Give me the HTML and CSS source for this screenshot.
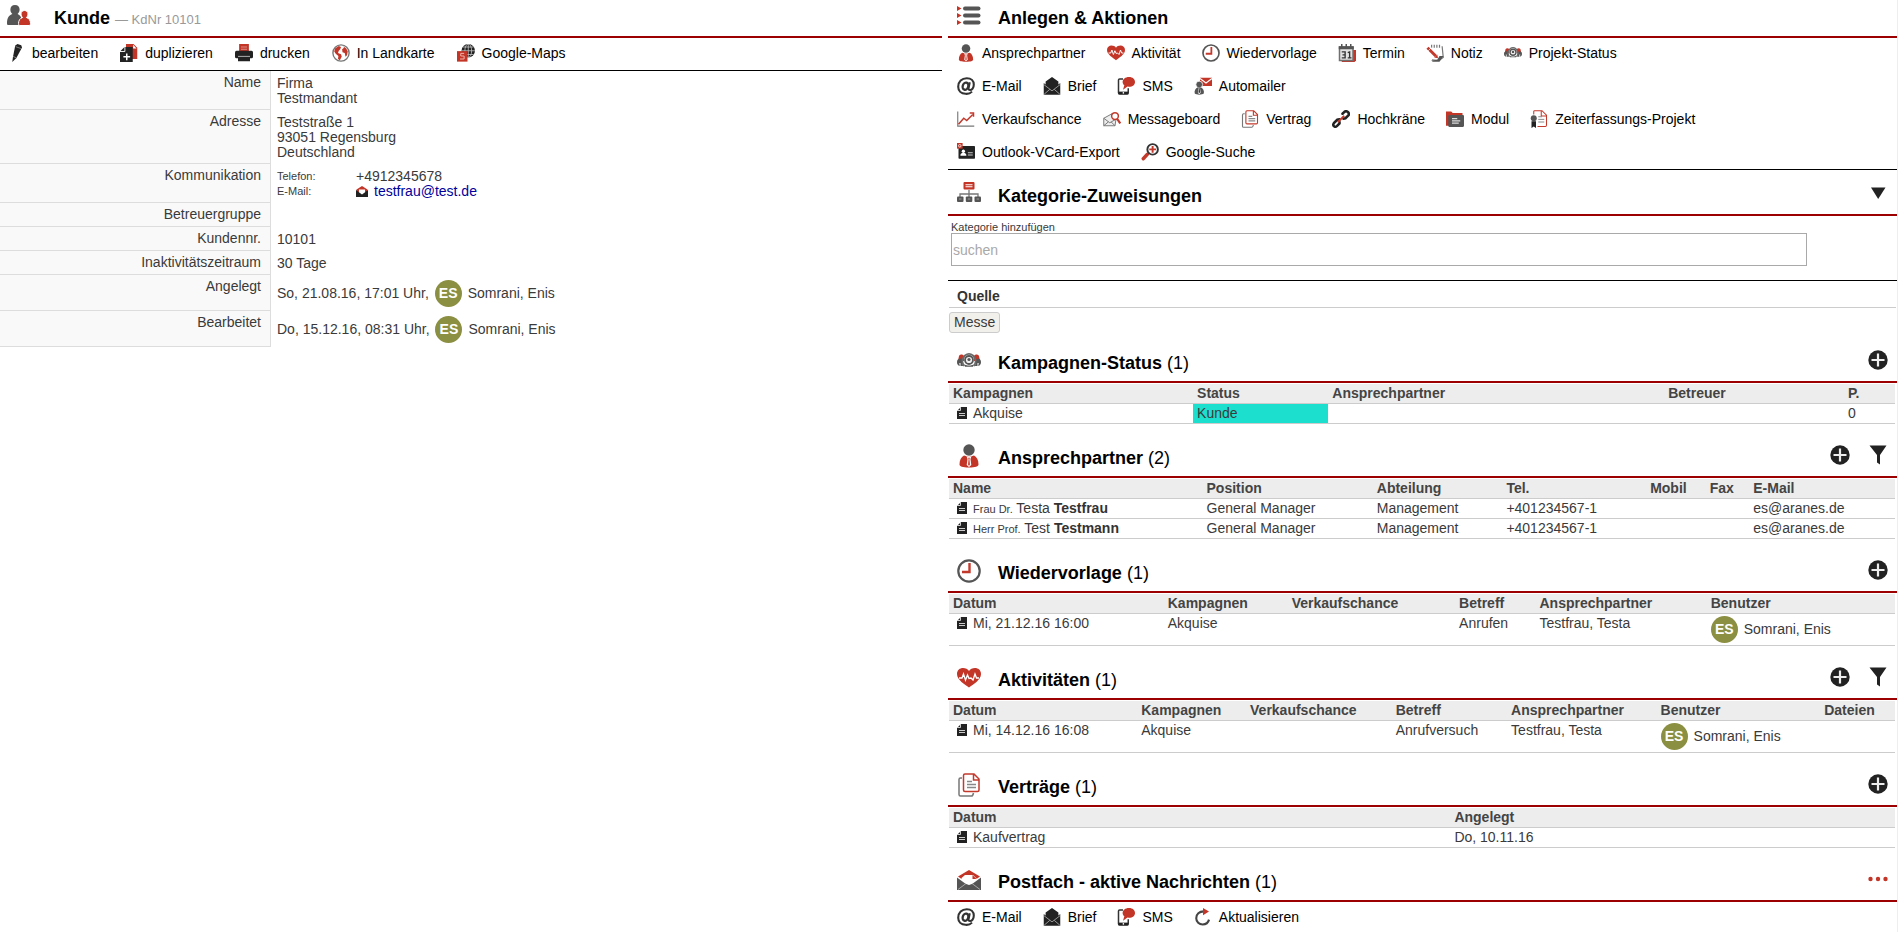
FILE: index.html
```html
<!DOCTYPE html>
<html lang="de">
<head>
<meta charset="utf-8">
<title>Kunde – KdNr 10101</title>
<link rel="stylesheet" href="styles.css">
</head>
<body>
<svg class="sprite" aria-hidden="true">
  <symbol id="users" viewBox="0 0 24 24">
    <path class="g" d="M8 1c3 0 4.600 2 4.600 4.600 0 2-.8 3.400-2 4.400 2.400 1 4 3 4 6l-1 5H1.500C.6 21 0 20.500 0 19.500 0 14 2 11 5.400 10 4 9 3.400 7.600 3.400 5.600 3.400 3 5 1 8 1z"/>
    <path class="r" stroke="#fff" stroke-width="1" d="M17.500 6.500c2.200 0 3.500 1.500 3.500 3.500 0 1.500-.6 2.700-1.600 3.500 2.800.8 4.100 3.200 4.100 6 0 1.300-.6 2-1.500 2h-9c-1 0-1.500-.7-1.500-2 0-2.800 1.300-5.200 4.100-6-1-.8-1.600-2-1.600-3.500 0-2 1.300-3.500 3.500-3.500z"/>
  </symbol>
  <symbol id="list" viewBox="0 0 24 24">
    <path class="r" d="M0 2l4.500 2.500L0 7zM0 9l4.500 2.500L0 14zM0 16l4.500 2.500L0 21z"/>
    <g class="g"><rect x="6" y="2.500" width="17.500" height="4" rx="2"/><rect x="6" y="9.500" width="17.500" height="4" rx="2"/><rect x="6" y="16.500" width="17.500" height="4" rx="2"/></g>
  </symbol>
  <symbol id="person" viewBox="0 0 24 24">
    <circle class="g" cx="12" cy="6" r="5.700"/>
    <path class="r" d="M7 11.500l5 1.500 5-1.500c3 1.500 4.500 5 4.500 9 0 2-3 3-9.500 3s-9.500-1-9.500-3c0-4 1.500-7.500 4.500-9z"/>
    <path fill="#fff" d="M9.500 12l2.500 1.500 2.500-1.500-1 3 .8 6L12 23l-2.300-2L10.500 15z"/>
    <path class="r" d="M11.300 14h1.400l-.3 1.500.5 5L12 22l-.9-1.500.5-5z"/>
  </symbol>
  <symbol id="heart" viewBox="0 0 24 24">
    <path class="r" d="M12 21.500C8 18.500 0 14 0 8c0-4 3-6 6-6 2.500 0 5 1 6 3 1-2 3.500-3 6-3 3 0 6 2 6 6 0 6-8 10.500-12 13.500z"/>
    <path class="l" stroke="#fff" stroke-width="1.300" d="M2 12h3l1.500-4 2 6 2-5 1.500 3.500L14 12l2 2 2-6 1.500 4H22"/>
  </symbol>
  <symbol id="clock" viewBox="0 0 24 24">
    <circle class="l sg" stroke-width="2.200" cx="12" cy="12" r="10.700"/>
    <path class="l sr" stroke-width="2.400" d="M12.500 4v9H5"/>
  </symbol>
  <symbol id="calendar" viewBox="0 0 24 24">
    <path class="r" d="M5 8h19v14l-2 2H5z"/>
    <path fill="#e2e2e2" stroke="#707070" stroke-width="2" d="M2 4h18v18H2z"/>
    <path class="g" d="M1 3h20v4H1zM4 0h2v5H4zM10 0h2v5h-2zM16 0h2v5h-2z"/>
    <path class="l" stroke="#333" stroke-width="1.800" d="M5 10.500h4.500v8H5M6 14.500h3.500M13 11.500l2.500-1v8M13 18.500h5"/>
  </symbol>
  <symbol id="note" viewBox="0 0 24 24">
    <path class="l" stroke="#777" stroke-width="1.600" d="M7.500 1v4M11 1v4M14.500 1v4M18 1v4M21.500 3l1.500 15-6 4-9-1"/>
    <path class="g" d="M23.500 16l-5.500 7.500H9l-2-1.500 8-1 3-5z"/>
    <path class="l sr" stroke-width="4" d="M2 5l11 11"/><path class="l" stroke="#fff" stroke-width="1" d="M3 9l4-4"/>
    <path class="r" d="M15 14l1 5-5-1z"/>
  </symbol>
  <symbol id="gears" viewBox="0 0 24 24">
    <path class="r" d="M2 7c1-2 4-2 5 0v5H1zM22 7c-1-2-4-2-5 0v5h6z"/>
    <path class="g" d="M0 13c0-3 3-4.500 5-2.500l1 6.500H3.500v-3H2.300l.5 3C.8 16.500 0 15 0 13zM24 13c0-3-3-4.500-5-2.500L18 17h2.500v-3h1.200l-.5 3c2-.5 2.800-2 2.800-4z"/>
    <path fill="none" stroke="#6a6a6a" stroke-width="1.800" d="M7 17c-2.500-4-1.500-8 1-10.500 2.500-2 5.500-2 8 0 2.500 2.500 3.500 6.500 1 10.500"/>
    <circle fill="#eee" stroke="#555" stroke-width="1.800" cx="12" cy="11" r="4"/><circle class="g" cx="12" cy="10.500" r="1.600"/>
    <path class="g" d="M7 15.500l3.500 1h3l3.500-1-1 2.300H8z"/>
  </symbol>
  <symbol id="at" viewBox="0 0 24 24">
    <path class="l" stroke="#333" stroke-width="2.800" d="M20 19.500C17.500 22 14.500 22.700 11.500 22.400 5.500 22.200 1.600 18.500 1.600 13 1.600 6 6.500 1.600 13 1.600c6 0 9.400 3.700 9.400 8.400 0 4.500-2.600 7.400-5 7.400-1.900 0-2.300-1.400-1.900-3L17 7"/>
    <ellipse class="l" stroke="#333" stroke-width="3" cx="11.300" cy="12.200" rx="3.700" ry="4.900" transform="rotate(18 11.300 12.200)"/>
  </symbol>
  <symbol id="letter" viewBox="0 0 24 24">
    <path class="d" d="M12 0l8.500 6v4l2.500-2v15.500H1V8l2.500 2V6z"/>
    <path class="l" stroke="#bbb" stroke-width="1" d="M1 10l11 8.500L23 10M1.500 23L9 16.500M22.500 23L15 16.500"/>
  </symbol>
  <symbol id="sms" viewBox="0 0 24 24">
    <path class="l" stroke="#333" stroke-width="2" d="M8 2.500H3.500c-1 0-1.500.5-1.500 1.500v17c0 1 .5 1.500 1.500 1.500h10c1 0 1.500-.5 1.500-1.500v-6"/>
    <path class="d" d="M2 19.500h13v3.500H2z"/><circle cx="8.500" cy="21.200" r="1.100" fill="#fff"/>
    <path class="r" d="M16 0c5 0 8 3 8 6.500S21 13 16 13l-2-.2L8 17l1.800-6C8.300 9.700 7.500 8.300 7.500 6.500 7.500 3 11 0 16 0z"/>
  </symbol>
  <symbol id="automailer" viewBox="0 0 24 24">
    <path class="r" d="M8 1h16v11H8z"/><path class="l" stroke="#fff" stroke-width="1.500" d="M8 2l8 6 8-6"/>
    <circle class="g" stroke="#fff" cx="7" cy="10" r="4.500"/>
    <path class="g" d="M1 22c-1-4 1-7 4-8h4c3 1 5 4 4 8-2 2-10 2-12 0z"/><path fill="#fff" d="M6 15h2l.8 6L7 23l-1.800-2z"/><path class="d" d="M6.500 15h1l.5 6H6z"/>
  </symbol>
  <symbol id="chart" viewBox="0 0 24 24">
    <path class="l" stroke="#777" stroke-width="1.500" d="M1 2v19.500h22"/>
    <path class="l sr" stroke-width="2" d="M2 19l7-8 4 3 8-8"/><path class="l sr" stroke-width="2" d="M17 4h5v5"/>
  </symbol>
  <symbol id="board" viewBox="0 0 24 24">
    <path fill="#eee" stroke="#777" stroke-width="1.300" d="M1 11l11-6 5 9-1 7H1z"/>
    <path class="l" stroke="#777" stroke-width="1.300" d="M1 11l8 6 7-4M1 21l6-5M16 21l-5-5"/>
    <circle fill="#fff" stroke="#c23a2c" stroke-width="2" cx="16" cy="8" r="4.500"/><path class="l sr" stroke-width="3" d="M19 12l4 6"/>
  </symbol>
  <symbol id="docs" viewBox="0 0 24 24">
    <path class="l" stroke="#777" stroke-width="1.500" d="M5 5H3.500C2.500 5 2 5.500 2 6.500v15c0 1 .5 1.500 1.500 1.500h11c1 0 1.500-.500 2-3"/>
    <path fill="#fff" stroke="#c23a2c" stroke-width="1.500" d="M8 1h9l5 5v11c0 1-.5 1.500-1.500 1.500H8c-1 0-1.500-.5-1.500-1.500V2.500C6.500 1.500 7 1 8 1zM16.500 1v6H22"/>
    <path class="l" stroke="#888" stroke-width="1.400" d="M10 8.500h5M10 11.500h9M10 14.500h9"/>
  </symbol>
  <symbol id="chain" viewBox="0 0 24 24">
    <g class="l" stroke="#222" stroke-width="3.400" stroke-linecap="round"><path d="M14 5l2.500-2.500c2-1.500 4-.5 5 .5s1.500 3 0 4.500L18 11l-3 .5M10 12.500l-3 .5-4.500 4.500c-1 1.500-1 3 0 4s2.800 1 4 0l3.500-3.500v-2"/></g>
    <path class="l sr" stroke-width="2.800" stroke-linecap="round" d="M8.500 15.500l7-7"/>
  </symbol>
  <symbol id="folder" viewBox="0 0 24 24">
    <path class="r" d="M0 2h7l2 2h13v3H0zM0 2h4v19H0z"/>
    <rect class="g" x="3" y="6.500" width="21" height="16" rx="1.500"/><path class="l" stroke="#ddd" stroke-width="1.500" d="M8 11.500h7M8 14.500h11M8 17.500h9"/>
  </symbol>
  <symbol id="cert" viewBox="0 0 24 24">
    <path class="l sr" stroke-width="1.400" d="M5 6V2c0-1 .5-1 1-1h10l6 6v13c0 1-.5 2-1.500 2H10M15 1v7h7"/>
    <path class="l" stroke="#888" stroke-width="1.300" d="M11 9h5M11 12.500h8M11 16h8"/>
    <circle class="g" cx="5" cy="11" r="4"/><path class="d" d="M2 15h6v9l-3-2-3 2z"/>
  </symbol>
  <symbol id="vcard" viewBox="0 0 24 24">
    <rect class="d" x="2" y="4" width="22" height="17" rx="1"/><rect class="r" x="0" y="0" width="7.500" height="7.500"/>
    <circle cx="3.700" cy="3.700" r="1.700" fill="none" stroke="#fff"/>
    <circle cx="8.500" cy="11" r="2.200" fill="#fff"/><path fill="#fff" d="M4.500 17c0-3 1.500-4 4-4s4 1 4 4z"/><path class="l" stroke="#ccc" stroke-width="1.400" d="M14.500 13H21M14.500 16H21"/>
  </symbol>
  <symbol id="search" viewBox="0 0 24 24">
    <path class="l sr" stroke-width="4.500" stroke-linecap="round" d="M3 21l5.500-6"/>
    <circle fill="#fff" stroke="#333" stroke-width="2.600" cx="15.500" cy="8.500" r="7"/><path class="l sr" stroke-width="2.600" d="M15.500 4v9M11 8.500h9"/>
  </symbol>
  <symbol id="pencil" viewBox="0 0 24 24">
    <path class="d" d="M11 2l3-2 5 1.500 1 3-7.500 14L7 24l1-7z"/><path class="l" stroke="#999" stroke-width="1" d="M8 16.500l4.500 2M11.500 3.500l7 2.500"/>
  </symbol>
  <symbol id="duplicate" viewBox="0 0 24 24">
    <path class="r" d="M8 0h10l5 5v15h-7V4H8z"/><path fill="#fff" d="M17.500 1l4.500 5h-4.500z"/>
    <path class="d" d="M6 4h11v20H0V10z"/><path class="l" stroke="#fff" stroke-width="1.200" d="M0 10h6.500V4"/><path class="l" stroke="#fff" stroke-width="2" d="M9 12.500v9M4.500 17h9"/>
  </symbol>
  <symbol id="printer" viewBox="0 0 24 24">
    <path class="r" d="M5.500 0h13v10h-13z"/><path class="l" stroke="#e6aaa4" stroke-width="1" d="M8 4h8M8 7h8"/>
    <rect class="d" x="0" y="9" width="24" height="10" rx="2"/><path class="d" d="M4 16h16v7H4z"/><path class="l" stroke="#ddd" stroke-width="1" d="M4 16.500h16"/>
  </symbol>
  <symbol id="globe" viewBox="0 0 24 24">
    <circle class="l" stroke="#777" stroke-width="1.800" cx="12" cy="12" r="10.800"/>
    <path class="r" d="M4 6l5-3.500L12 4l-1 3-2 2-1 3 4 1.500 1 3-2.500 5L8 20l.5-4L5 13 3 10zM15 3l4 3 2 4-1 5-2 2-1-5-3-1-.5-4 2.500-2z"/>
  </symbol>
  <symbol id="maps" viewBox="0 0 24 24">
    <circle class="d" cx="15" cy="9" r="9"/>
    <g class="l" stroke="#ccc" stroke-width="1"><ellipse cx="15" cy="9" rx="4.500" ry="9"/><path d="M15 0v18M6 9h18M8 4h14M8 14h14"/></g>
    <rect class="r" x="0" y="9.500" width="14" height="14"/><path class="l" stroke="#f3c0ba" stroke-width="1.200" d="M9.500 12.500H5v3.500h4.500V20H4"/>
  </symbol>
  <symbol id="org" viewBox="0 0 24 24">
    <rect class="r" x="6.500" y="0" width="11" height="7.500" rx="1"/><path class="l" stroke="#fff" stroke-width="1.100" d="M8.500 2.700h7M8.500 4.800h7"/>
    <path class="l" stroke="#777" stroke-width="1.300" d="M12 8v8M3 16v-4h18v4"/>
    <g class="g"><rect x="0" y="14.500" width="6.500" height="5.500" rx="1"/><rect x="8.800" y="14.500" width="6.500" height="5.500" rx="1"/><rect x="17.500" y="14.500" width="6.500" height="5.500" rx="1"/></g>
    <path class="l" stroke="#999" stroke-width="1" d="M2 17h2.500M10.800 17h2.500M19.500 17H22"/>
  </symbol>
  <symbol id="openmail" viewBox="0 0 24 24">
    <path class="r" d="M12 2l11 6.500L18 12H6L1 8.500z"/>
    <path fill="#fff" d="M4.500 10L8 7h8l4 4-8 6.500L4.500 12z"/><path class="r" d="M15.500 7l4 4h-4z"/>
    <path class="g" d="M0 9.500l8.500 6.300L12 17l3.500-1.200L24 9.500V22H0z"/>
    <path class="l" stroke="#bbb" stroke-width=".8" d="M1 21.500l8-6M23 21.500l-8-6"/>
  </symbol>
  <symbol id="minimail" viewBox="0 0 12 12">
    <path class="r" d="M6 0l5.500 3.500V6H.5V3.500z"/><path fill="#fff" d="M3 3.500h6V7L6 9 3 7z"/>
    <path class="d" d="M0 4l6 4.500L12 4v7H0z"/>
  </symbol>
  <symbol id="refresh" viewBox="0 0 24 24">
    <path class="l" stroke="#444" stroke-width="2.800" d="M13 4.500c-6 0-10 3.500-10 9 0 5 4 8.500 8.500 8.500 4 0 7.500-2.500 8.500-6.500"/>
    <path class="r" d="M12 0l8 4.500-8 5z"/>
  </symbol>
  <symbol id="down" viewBox="0 0 20 20"><path class="d" d="M3 4.500h14.500L10.200 16z"/></symbol>
  <symbol id="plus" viewBox="0 0 20 20"><circle class="d" cx="10" cy="10" r="9.700"/><path class="l" stroke="#eee" stroke-width="2.200" d="M10 3.500v13M3.500 10h13"/></symbol>
  <symbol id="filter" viewBox="0 0 20 20"><path class="d" d="M1.500.5h17L12 10v9.500l-3-2V10z"/></symbol>
  <symbol id="dots" viewBox="0 0 20 20"><g class="r"><circle cx="2.500" cy="10" r="2.200"/><circle cx="10" cy="10" r="2.200"/><circle cx="17.500" cy="10" r="2.200"/></g></symbol>
  <symbol id="file" viewBox="0 0 10 12"><path class="d" d="M4 0h6v12H0V4z"/><path class="l" stroke="#ccc" stroke-width="1" d="M0 3.500h3.500V0M2 6.500h6M2 8.500h6"/></symbol>
</svg>

<div class="page">
  <main class="panel">
    <header class="head head--main">
      <svg class="head__icon"><use href="#users"/></svg>
      <h1 class="head__title">Kunde <span class="head__sub">— KdNr 10101</span></h1>
    </header>
    <nav class="tools tools--main tools--lined">
      <div class="tools__row">
        <button class="tool"><svg class="tool__icon"><use href="#pencil"/></svg>bearbeiten</button>
        <button class="tool"><svg class="tool__icon"><use href="#duplicate"/></svg>duplizieren</button>
        <button class="tool"><svg class="tool__icon"><use href="#printer"/></svg>drucken</button>
        <button class="tool"><svg class="tool__icon"><use href="#globe"/></svg>In Landkarte</button>
        <button class="tool"><svg class="tool__icon"><use href="#maps"/></svg>Google-Maps</button>
      </div>
    </nav>
    <dl class="facts">
      <dt>Name</dt><dd>Firma<br>Testmandant</dd>
      <dt>Adresse</dt><dd>Teststraße 1<br>93051 Regensburg<br>Deutschland</dd>
      <dt>Kommunikation</dt>
      <dd>
        <div class="contact"><span class="contact__label">Telefon:</span><span>+4912345678</span></div>
        <div class="contact"><span class="contact__label">E-Mail:</span><svg class="contact__icon"><use href="#minimail"/></svg><a class="link" href="mailto:testfrau@test.de">testfrau@test.de</a></div>
      </dd>
      <dt>Betreuergruppe</dt><dd></dd>
      <dt>Kundennr.</dt><dd>10101</dd>
      <dt>Inaktivitätszeitraum</dt><dd>30 Tage</dd>
      <dt>Angelegt</dt><dd><div class="user">So, 21.08.16, 17:01 Uhr, <span class="avatar">ES</span>Somrani, Enis</div></dd>
      <dt>Bearbeitet</dt><dd><div class="user">Do, 15.12.16, 08:31 Uhr, <span class="avatar">ES</span>Somrani, Enis</div></dd>
    </dl>
  </main>

  <aside class="panel">
    <section>
      <header class="head">
        <svg class="head__icon"><use href="#list"/></svg>
        <h2 class="head__title">Anlegen &amp; Aktionen</h2>
      </header>
      <nav class="tools tools--lined">
        <div class="tools__row">
          <button class="tool"><svg class="tool__icon"><use href="#person"/></svg>Ansprechpartner</button>
          <button class="tool"><svg class="tool__icon"><use href="#heart"/></svg>Aktivität</button>
          <button class="tool"><svg class="tool__icon"><use href="#clock"/></svg>Wiedervorlage</button>
          <button class="tool"><svg class="tool__icon"><use href="#calendar"/></svg>Termin</button>
          <button class="tool"><svg class="tool__icon"><use href="#note"/></svg>Notiz</button>
          <button class="tool"><svg class="tool__icon"><use href="#gears"/></svg>Projekt-Status</button>
        </div>
        <div class="tools__row">
          <button class="tool"><svg class="tool__icon"><use href="#at"/></svg>E-Mail</button>
          <button class="tool"><svg class="tool__icon"><use href="#letter"/></svg>Brief</button>
          <button class="tool"><svg class="tool__icon"><use href="#sms"/></svg>SMS</button>
          <button class="tool"><svg class="tool__icon"><use href="#automailer"/></svg>Automailer</button>
        </div>
        <div class="tools__row">
          <button class="tool"><svg class="tool__icon"><use href="#chart"/></svg>Verkaufschance</button>
          <button class="tool"><svg class="tool__icon"><use href="#board"/></svg>Messageboard</button>
          <button class="tool"><svg class="tool__icon"><use href="#docs"/></svg>Vertrag</button>
          <button class="tool"><svg class="tool__icon"><use href="#chain"/></svg>Hochkräne</button>
          <button class="tool"><svg class="tool__icon"><use href="#folder"/></svg>Modul</button>
          <button class="tool"><svg class="tool__icon"><use href="#cert"/></svg>Zeiterfassungs-Projekt</button>
        </div>
        <div class="tools__row">
          <button class="tool"><svg class="tool__icon"><use href="#vcard"/></svg>Outlook-VCard-Export</button>
          <button class="tool"><svg class="tool__icon"><use href="#search"/></svg>Google-Suche</button>
        </div>
      </nav>
    </section>

    <section class="section section--near">
      <header class="head">
        <svg class="head__icon"><use href="#org"/></svg>
        <h2 class="head__title">Kategorie-Zuweisungen</h2>
        <button class="action" aria-label="Einklappen"><svg><use href="#down"/></svg></button>
      </header>
      <div class="field">
        <label class="field__label" for="category">Kategorie hinzufügen</label>
        <input class="field__input" id="category" type="text" placeholder="suchen">
      </div>
      <h3 class="group">Quelle</h3>
      <div class="chips"><span class="chip">Messe</span></div>
    </section>

    <section class="section section--mid">
      <header class="head">
        <svg class="head__icon"><use href="#gears"/></svg>
        <h2 class="head__title">Kampagnen-Status <span class="count">(1)</span></h2>
        <button class="action" aria-label="Hinzufügen"><svg><use href="#plus"/></svg></button>
      </header>
      <table class="grid">
        <colgroup><col style="width:25.8%"><col style="width:14.3%"><col style="width:35.5%"><col style="width:19%"><col></colgroup>
        <thead><tr><th>Kampagnen</th><th>Status</th><th>Ansprechpartner</th><th>Betreuer</th><th>P.</th></tr></thead>
        <tbody><tr><td><svg class="file"><use href="#file"/></svg>Akquise</td><td class="status">Kunde</td><td></td><td></td><td>0</td></tr></tbody>
      </table>
    </section>

    <section class="section">
      <header class="head">
        <svg class="head__icon"><use href="#person"/></svg>
        <h2 class="head__title">Ansprechpartner <span class="count">(2)</span></h2>
        <button class="action" aria-label="Hinzufügen"><svg><use href="#plus"/></svg></button>
        <button class="action" aria-label="Filtern"><svg><use href="#filter"/></svg></button>
      </header>
      <table class="grid">
        <colgroup><col style="width:26.8%"><col style="width:18%"><col style="width:13.7%"><col style="width:15.2%"><col style="width:6.3%"><col style="width:4.6%"><col></colgroup>
        <thead><tr><th>Name</th><th>Position</th><th>Abteilung</th><th>Tel.</th><th>Mobil</th><th>Fax</th><th>E-Mail</th></tr></thead>
        <tbody>
          <tr><td><svg class="file"><use href="#file"/></svg><small>Frau Dr.</small> Testa <b>Testfrau</b></td><td>General Manager</td><td>Management</td><td>+401234567-1</td><td></td><td></td><td>es@aranes.de</td></tr>
          <tr><td><svg class="file"><use href="#file"/></svg><small>Herr Prof.</small> Test <b>Testmann</b></td><td>General Manager</td><td>Management</td><td>+401234567-1</td><td></td><td></td><td>es@aranes.de</td></tr>
        </tbody>
      </table>
    </section>

    <section class="section">
      <header class="head">
        <svg class="head__icon"><use href="#clock"/></svg>
        <h2 class="head__title">Wiedervorlage <span class="count">(1)</span></h2>
        <button class="action" aria-label="Hinzufügen"><svg><use href="#plus"/></svg></button>
      </header>
      <table class="grid">
        <colgroup><col style="width:22.7%"><col style="width:13.1%"><col style="width:17.7%"><col style="width:8.5%"><col style="width:18.1%"><col></colgroup>
        <thead><tr><th>Datum</th><th>Kampagnen</th><th>Verkaufschance</th><th>Betreff</th><th>Ansprechpartner</th><th>Benutzer</th></tr></thead>
        <tbody><tr><td><svg class="file"><use href="#file"/></svg>Mi, 21.12.16 16:00</td><td>Akquise</td><td></td><td>Anrufen</td><td>Testfrau, Testa</td><td><div class="user"><span class="avatar">ES</span>Somrani, Enis</div></td></tr></tbody>
      </table>
    </section>

    <section class="section">
      <header class="head">
        <svg class="head__icon"><use href="#heart"/></svg>
        <h2 class="head__title">Aktivitäten <span class="count">(1)</span></h2>
        <button class="action" aria-label="Hinzufügen"><svg><use href="#plus"/></svg></button>
        <button class="action" aria-label="Filtern"><svg><use href="#filter"/></svg></button>
      </header>
      <table class="grid">
        <colgroup><col style="width:19.9%"><col style="width:11.5%"><col style="width:15.4%"><col style="width:12.2%"><col style="width:15.8%"><col style="width:17.3%"><col></colgroup>
        <thead><tr><th>Datum</th><th>Kampagnen</th><th>Verkaufschance</th><th>Betreff</th><th>Ansprechpartner</th><th>Benutzer</th><th>Dateien</th></tr></thead>
        <tbody><tr><td><svg class="file"><use href="#file"/></svg>Mi, 14.12.16 16:08</td><td>Akquise</td><td></td><td>Anrufversuch</td><td>Testfrau, Testa</td><td><div class="user"><span class="avatar">ES</span>Somrani, Enis</div></td><td></td></tr></tbody>
      </table>
    </section>

    <section class="section">
      <header class="head">
        <svg class="head__icon"><use href="#docs"/></svg>
        <h2 class="head__title">Verträge <span class="count">(1)</span></h2>
        <button class="action" aria-label="Hinzufügen"><svg><use href="#plus"/></svg></button>
      </header>
      <table class="grid">
        <colgroup><col style="width:53%"><col></colgroup>
        <thead><tr><th>Datum</th><th>Angelegt</th></tr></thead>
        <tbody><tr><td><svg class="file"><use href="#file"/></svg>Kaufvertrag</td><td>Do, 10.11.16</td></tr></tbody>
      </table>
    </section>

    <section class="section">
      <header class="head">
        <svg class="head__icon"><use href="#openmail"/></svg>
        <h2 class="head__title">Postfach - aktive Nachrichten <span class="count">(1)</span></h2>
        <button class="action" aria-label="Mehr"><svg><use href="#dots"/></svg></button>
      </header>
      <nav class="tools">
        <div class="tools__row">
          <button class="tool"><svg class="tool__icon"><use href="#at"/></svg>E-Mail</button>
          <button class="tool"><svg class="tool__icon"><use href="#letter"/></svg>Brief</button>
          <button class="tool"><svg class="tool__icon"><use href="#sms"/></svg>SMS</button>
          <button class="tool"><svg class="tool__icon"><use href="#refresh"/></svg>Aktualisieren</button>
        </div>
      </nav>
    </section>
  </aside>
</div>
</body>
</html>
```
FILE: styles.css
```css
* { box-sizing: border-box; }

body {
  margin: 0;
  background: #fff;
  color: #3a3a3a;
  font: 14px/15px "Liberation Sans", Arial, sans-serif;
}

h1, h2, h3, dl, dd { margin: 0; }
button { font: inherit; color: #000; background: none; border: 0; padding: 0; cursor: pointer; }
svg { display: block; flex: none; }

.sprite { position: absolute; width: 0; height: 0; }
.r { fill: #c23527; }
.g { fill: #555; }
.d { fill: #222; }
.l { fill: none; }
.sr { stroke: #c23a2c; }
.sg { stroke: #555; }

.page {
  display: grid;
  grid-template-columns: minmax(0, 942fr) minmax(0, 949fr);
  column-gap: 6px;
  min-height: 100vh;
  border-right: 1px solid #eee;
}

/* Section heading bars */
.head {
  display: flex;
  align-items: flex-start;
  gap: 18px;
  padding: 4px 9px 4px 9px;
  border-bottom: 2px solid #9c0000;
}
.head--main { padding-left: 7px; gap: 24px; }
.head__icon { width: 24px; height: 24px; }
.head__title { flex: 1; font-size: 18px; line-height: 28px; color: #000; margin-left: -1px; }
.head__sub { font-size: 13px; line-height: 15px; font-weight: normal; color: #999; }
.count { font-weight: normal; }
.action { padding-top: 1px; }
.action svg { width: 20px; height: 20px; }

.section { margin-top: 16px; }
.section--near { margin-top: 8px; }
.section--mid { margin-top: 12px; }

/* Icon toolbars */
.tools { display: flex; flex-direction: column; gap: 3px; padding-left: 9px; }
.tools--main { padding-left: 7px; }
.tools--lined { padding-bottom: 2px; border-bottom: 1px solid #000; }
.tools__row { display: flex; gap: 21px; height: 30px; }
.tools--main .tools__row { gap: 22px; }
.tool { display: flex; align-items: center; gap: 7px; white-space: nowrap; }
.tool__icon { width: 18px; height: 18px; }

/* Customer facts */
.facts { display: grid; grid-template-columns: 271px minmax(0, 1fr); }
.facts dt {
  padding: 4px 9px 4px 0;
  text-align: right;
  background: #f9f9f9;
  border-right: 1px solid #ddd;
  border-bottom: 1px solid #ddd;
}
.facts dd { padding: 5px 0 4px 6px; min-height: 24px; }
.contact { display: flex; align-items: center; height: 15px; }
.contact__label { width: 79px; font-size: 11px; }
.contact__icon { width: 12px; height: 12px; margin-right: 6px; }
.link { color: #00009c; text-decoration: none; }

.user { display: flex; align-items: center; white-space: pre; }
.avatar {
  width: 27px;
  height: 27px;
  margin-right: 6px;
  border-radius: 50%;
  background: #8b8f41;
  color: #fff;
  font-weight: bold;
  line-height: 27px;
  text-align: center;
}
.facts .avatar { margin-left: 2px; }

/* Category field */
.field { padding: 5px 90px 14px 3px; border-bottom: 1px solid #000; }
.field__label { display: block; font-size: 11px; line-height: 12px; }
.field__input {
  display: block;
  width: 100%;
  height: 33px;
  padding: 0 1px;
  border: 1px solid #a9a9a9;
  font: inherit;
}
.field__input::placeholder { color: #a9a9a9; }
.group { margin: 0 1px; padding: 8px 8px 3px; border-bottom: 1px solid #ccc; font-size: 14px; color: #333; }
.chips { display: flex; padding: 4px 1px 0; }
.chip { padding: 0 4px; border: 1px solid #ccc; border-radius: 3px; background: #f2f0eb; line-height: 19px; }

/* Record tables */
.grid {
  width: calc(100% - 3px);
  margin: 1px 2px 0 1px;
  border-collapse: separate;
  border-spacing: 0;
  table-layout: fixed;
}
.grid th, .grid td {
  padding: 2px 0 2px 4px;
  border-bottom: 1px solid #ccc;
  text-align: left;
  vertical-align: top;
  white-space: nowrap;
}
.grid th { background: #ededed; color: #444; }
.grid .status { background: #1ddfce; }
.grid small { font-size: 11px; line-height: 11px; }
.grid b { color: #333; }
.file { display: inline-block; width: 10px; height: 12px; margin: 0 6px 0 4px; vertical-align: -1px; }
```
